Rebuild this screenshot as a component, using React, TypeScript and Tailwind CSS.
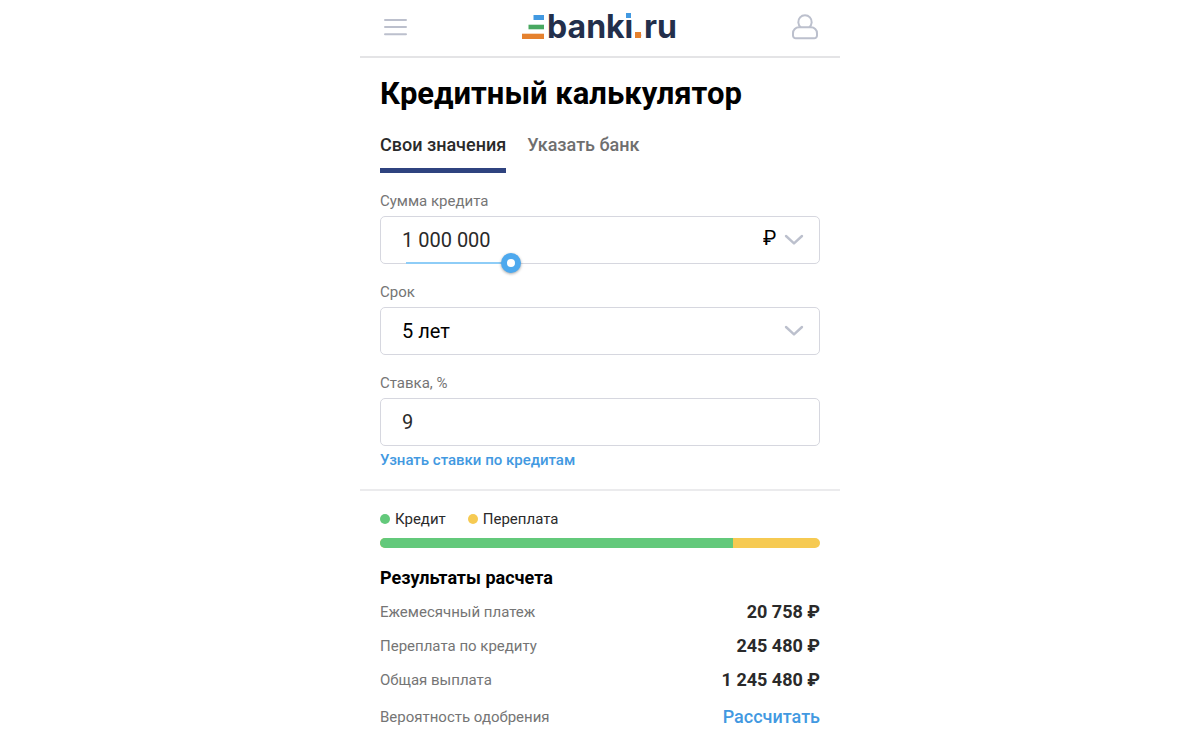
import { useState } from "react"
import { clsx } from "clsx"

const MAX_AMOUNT = 4000000

const tabs = [
  { id: "own", label: "Свои значения" },
  { id: "bank", label: "Указать банк" },
]

const results = [
  { label: "Ежемесячный платеж", value: "20 758 ₽" },
  { label: "Переплата по кредиту", value: "245 480 ₽" },
  { label: "Общая выплата", value: "1 245 480 ₽" },
]

const formatAmount = (value: number) =>
  String(value).replace(/\B(?=(\d{3})+(?!\d))/g, " ")

const Chevron = () => (
  <svg
    className="pointer-events-none absolute top-[18px] right-4"
    width="20"
    height="12"
    viewBox="0 0 20 12"
    fill="none"
    stroke="#bcc0cd"
    strokeWidth="2.4"
    strokeLinecap="round"
    strokeLinejoin="round"
  >
    <path d="M2 2 10 9.400 18 2" />
  </svg>
)

// The dots of the wordmark are square, so they lie over the round ones of the font
const Logo = () => (
  <a href="#" className="flex items-center gap-[3px]" aria-label="banki.ru">
    <svg width="22" height="24" viewBox="0 0 22 24">
      <path d="M11.500 0H22v5H11.500z" fill="#4299e1" />
      <path d="M6.500 9.700H22v4.600H6.500z" fill="#48a860" />
      <path d="M0 18.700h22V24H0z" fill="#e5812e" />
    </svg>
    <span className="[font-family:Inter,sans-serif] text-[32px] leading-6 font-bold text-[#232f4b]">
      bank
      <span className="relative">
        i
        <span className="absolute top-[6px] left-0 h-[7px] w-full bg-white">
          <span className="mx-auto block h-[5px] w-[5px] bg-[#4299e1]" />
        </span>
      </span>
      <span className="relative text-[#e5812e]">
        .
        <span className="absolute bottom-[8px] left-[2px] h-[6px] w-[6px] bg-[#e5812e]" />
      </span>
      ru
    </span>
  </a>
)

const Header = () => (
  <header className="flex h-[58px] items-center justify-between border-b-2 border-[#e4e4e6] pr-[22px] pb-[2px] pl-6">
    <button type="button" aria-label="Меню">
      <svg width="23" height="18" viewBox="0 0 23 18" stroke="#bcc0cd" strokeWidth="2" strokeLinecap="round">
        <path d="M1 2h21M1 9h21M1 16.200h21" />
      </svg>
    </button>
    <Logo />
    <button type="button" aria-label="Профиль">
      <svg width="26" height="26" viewBox="0 0 26 26" fill="none" stroke="#bcc0cd" strokeWidth="2">
        <path d="M8.800 13.200a6.700 6.700 0 1 1 8.400 0" />
        <path d="M7 13.200h12a6 6 0 0 1 6 6v2.300a2.800 2.800 0 0 1-2.800 2.800H3.800A2.800 2.800 0 0 1 1 21.500v-2.300a6 6 0 0 1 6-6Z" />
      </svg>
    </button>
  </header>
)

const labelClass = "mt-[18px] mb-[5px] block text-[15px] leading-5 text-[#757575]"
const fieldClass =
  "h-12 w-full appearance-none rounded-[5px] border border-[#d6d7df] bg-white px-[21px] text-xl outline-none"

export default function App() {
  const [tab, setTab] = useState("own")
  const [amount, setAmount] = useState(1000000)
  const [rate, setRate] = useState("9")

  return (
    <div className="mx-auto w-full max-w-[480px] bg-white [font-family:Roboto,sans-serif] text-[#2a2a2a]">
      <Header />

      <main>
        <form className="px-5 pt-[18px]">
          <h1 className="text-[31px] leading-9 font-bold text-black">Кредитный калькулятор</h1>

          <div className="mt-[21px] flex gap-[21px]">
            {tabs.map((item) => (
              <button
                key={item.id}
                type="button"
                onClick={() => setTab(item.id)}
                className={clsx(
                  "border-b-[5px] pb-[11px] text-lg leading-6 font-medium",
                  tab === item.id ? "border-[#2f437f]" : "border-transparent text-[#6f6f6f]"
                )}
              >
                {item.label}
              </button>
            ))}
          </div>

          <label htmlFor="amount" className={labelClass}>Сумма кредита</label>
          <div className="relative">
            <input
              id="amount"
              type="text"
              inputMode="numeric"
              className={fieldClass}
              value={formatAmount(amount)}
              onChange={(e) => setAmount(Number(e.target.value.replace(/\D/g, "")))}
            />
            <select
              aria-label="Валюта"
              className="absolute top-2 right-[15px] h-7 w-[42px] appearance-none bg-transparent text-xl text-black outline-none"
            >
              <option>₽</option>
            </select>
            <Chevron />
            <div className="absolute right-4 -bottom-[9px] left-[26px] flex h-5 items-center">
              <div
                className="absolute h-[2px] bg-[#8ecdf7]"
                style={{ width: `${Math.min(amount / MAX_AMOUNT, 1) * 100}%` }}
              />
              <input
                type="range"
                aria-label="Сумма кредита"
                min={0}
                max={MAX_AMOUNT}
                step={10000}
                value={amount}
                onChange={(e) => setAmount(Number(e.target.value))}
                className="relative h-5 w-full appearance-none bg-transparent [&::-webkit-slider-thumb]:h-5 [&::-webkit-slider-thumb]:w-5 [&::-webkit-slider-thumb]:appearance-none [&::-webkit-slider-thumb]:rounded-full [&::-webkit-slider-thumb]:border-[6px] [&::-webkit-slider-thumb]:border-[#4ea9ee] [&::-webkit-slider-thumb]:bg-white [&::-webkit-slider-thumb]:shadow-[0_1px_3px_rgba(0,0,0,0.35)]"
              />
            </div>
          </div>

          <label htmlFor="term" className={labelClass}>Срок</label>
          <div className="relative">
            <select id="term" defaultValue="5 лет" className={clsx(fieldClass, "text-black")}>
              <option>1 год</option>
              <option>3 года</option>
              <option>5 лет</option>
              <option>7 лет</option>
            </select>
            <Chevron />
          </div>

          <label htmlFor="rate" className={labelClass}>Ставка, %</label>
          <input
            id="rate"
            type="text"
            className={fieldClass}
            value={rate}
            onChange={(e) => setRate(e.target.value)}
          />
          <a href="#" className="mt-1 block text-[15px] leading-5 font-medium text-[#4299e1]">
            Узнать ставки по кредитам
          </a>
        </form>

        <section className="mt-[19px] border-t-2 border-[#ebebed] px-5 pt-[18px]">
          <div className="flex gap-[22px] text-[15px] leading-5">
            <span className="flex items-center gap-[5px]">
              <span className="h-[10px] w-[10px] rounded-full bg-[#63c97b]" />
              Кредит
            </span>
            <span className="flex items-center gap-[5px]">
              <span className="h-[10px] w-[10px] rounded-full bg-[#f6ca52]" />
              Переплата
            </span>
          </div>
          <div className="mt-[9px] flex h-[10px] overflow-hidden rounded-full bg-[#f6ca52]">
            <div className="w-[80.3%] bg-[#63c97b]" />
          </div>

          <h2 className="mt-[18px] text-lg leading-6 font-bold text-black">Результаты расчета</h2>
          <dl className="mt-[5px]">
            {results.map((row) => (
              <div key={row.label} className="flex h-[34px] items-center justify-between">
                <dt className="text-[15px] text-[#757575]">{row.label}</dt>
                <dd className="text-lg font-bold">{row.value}</dd>
              </div>
            ))}
            <div className="mt-[3px] flex h-[34px] items-center justify-between">
              <dt className="text-[15px] text-[#757575]">Вероятность одобрения</dt>
              <dd>
                <a href="#" className="text-lg font-medium text-[#4299e1]">Рассчитать</a>
              </dd>
            </div>
          </dl>
        </section>
      </main>
    </div>
  )
}
